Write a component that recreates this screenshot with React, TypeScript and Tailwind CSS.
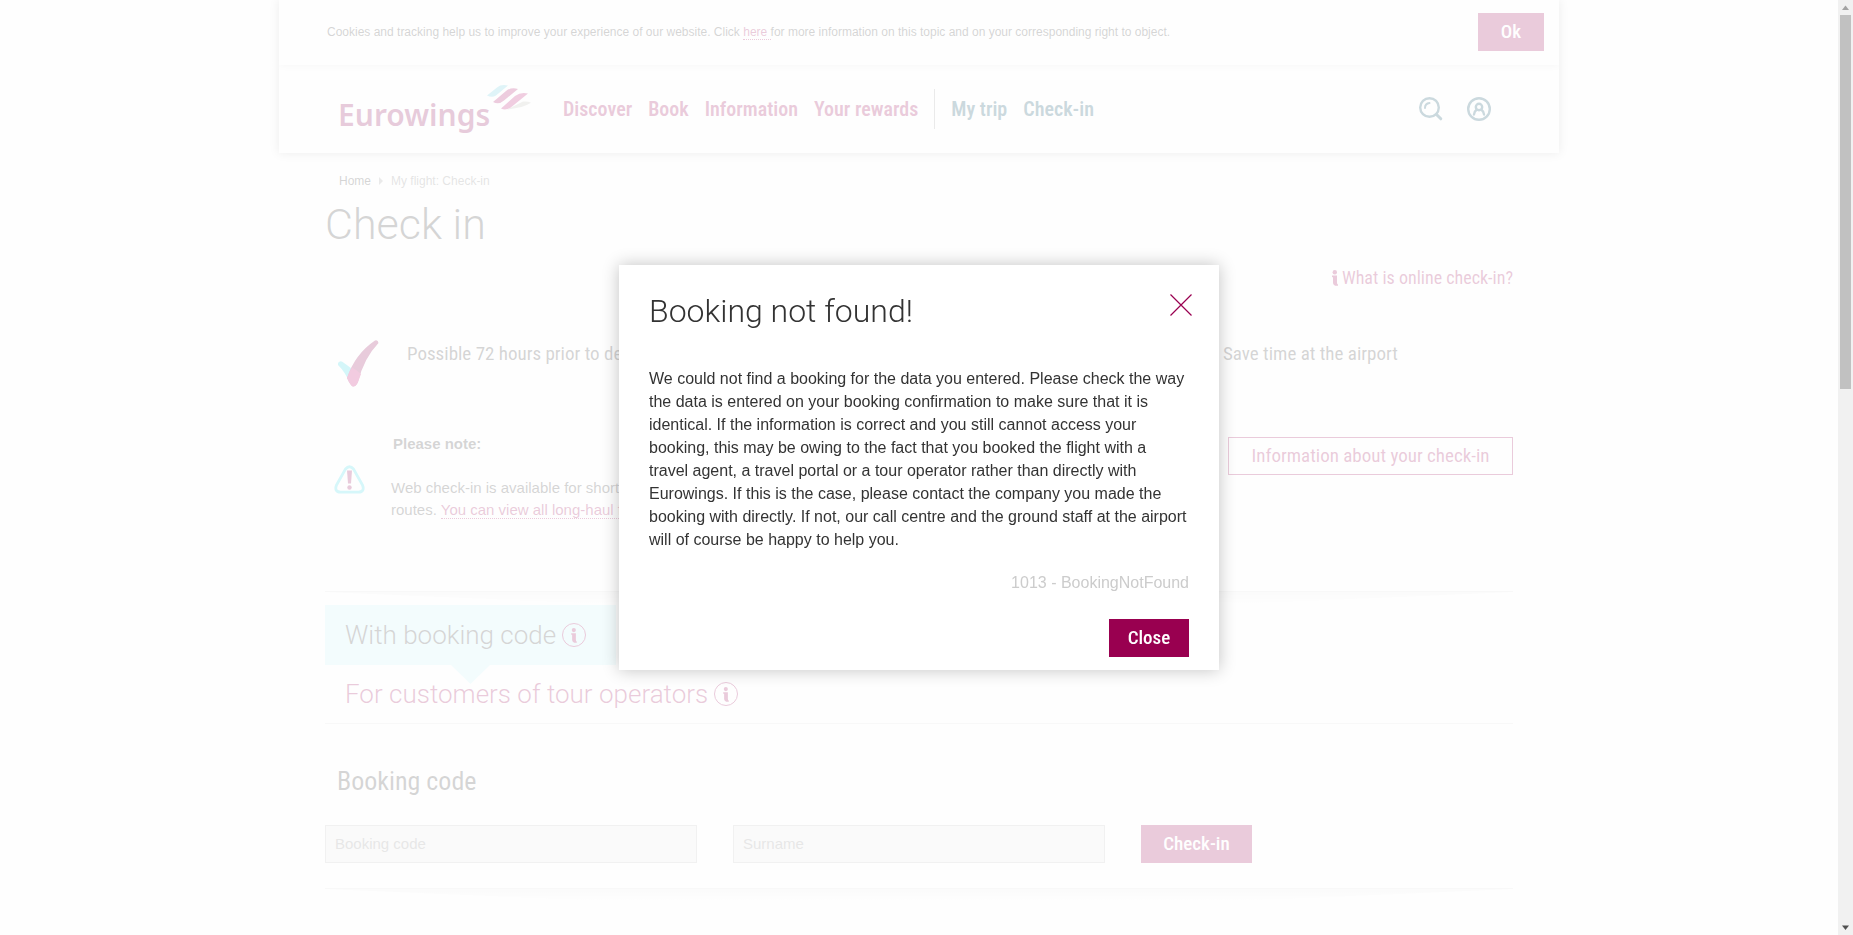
import type { ReactNode } from "react";

const NARROW = "font-['Roboto_Condensed','Liberation_Sans_Narrow','Liberation_Sans',sans-serif]";
const LIGHT = "font-['Roboto','Inter',sans-serif] font-light";

function Logo() {
  return (
    <a href="#home" aria-label="Eurowings" className="relative -ml-px flex h-[50px] w-[193px] items-end text-[#8a0050]">
      <span className="font-['Noto_Sans','Open_Sans',sans-serif] text-[30px] leading-[38px] font-semibold">Eurowings</span>
      <svg className="absolute top-0 right-0 h-[27px] w-[44px]" viewBox="0 0 44 27" aria-hidden="true">
        <path d="M20 25.500 L36 17.500 Q41 17 44 18.800 Q36 24 20 25.500Z" fill="#bdbdb6" />
        <path d="M0 11.500 L10 3.500 Q14 0 21 1.500 L9 11.500 Q5 14 0 11.500Z" fill="#66cbe0" />
        <path d="M6 18 L19 7 Q24 3 31 5 L17 16.500 Q12 21 6 18Z" fill="#a80860" />
        <path d="M14 24.500 L28 12 Q34 7.500 41 9.500 L25 22.500 Q19.500 27 14 24.500Z" fill="#b80a6a" />
      </svg>
    </a>
  );
}

function InfoGlyph({ className }: { className: string }) {
  return (
    <svg className={className} viewBox="0 0 6 16" fill="currentColor" aria-hidden="true">
      <circle cx="2.800" cy="2.200" r="2.200" />
      <path d="M0 5.500 H5 V12.500 Q5 14.500 6 14.500 V15.800 Q1 16.200 1 12.500 V7.500 Q1 7 0 7Z" />
    </svg>
  );
}

function InfoButton({ label }: { label: string }) {
  return (
    <button type="button" aria-label={label} className="flex size-6 items-center justify-center rounded-full border border-[#990050] text-[#990050]">
      <InfoGlyph className="h-[15px] w-[6px]" />
    </button>
  );
}

function CheckMark() {
  return (
    <svg className="ml-[13px] h-[47px] w-[41px] shrink-0" viewBox="0 0 41 47" aria-hidden="true">
      <path d="M1 22 Q3 20 6 23 Q12 27 20 34 L11 42 Q8 33 0 25 Q-0.500 23 1 22Z" fill="#30d6e6" />
      <path d="M9 38 Q17 14 37 0.500 Q40 -0.500 40.500 3 Q26 18 20 42 Q18 46.500 15 46.500 Q13 46.500 9 38Z" fill="#8f0050" />
      <path d="M9 38 Q11 32 14 27.500 Q18 29.500 23 34 L20 42 Q18 46.500 15 46.500 Q13 46.500 9 38Z" fill="#c40468" />
    </svg>
  );
}

function Benefit({ children }: { children: ReactNode }) {
  return (
    <li className="flex h-[47px] items-start">
      <CheckMark />
      <span className={`${NARROW} ml-7 text-[19px] leading-[28px] whitespace-nowrap`}>{children}</span>
    </li>
  );
}

function ShadowRule() {
  return (
    <div className="h-[14px] border-t border-[#dedede]" aria-hidden="true">
      <div className="h-full bg-linear-to-b from-[#ededed] to-white [clip-path:polygon(0_0,100%_0,75%_100%,25%_100%)]" />
    </div>
  );
}

function Field({ label }: { label: string }) {
  return (
    <input
      type="text"
      aria-label={label}
      placeholder={label}
      className="h-[38px] w-full border border-[#bcbcbc] bg-[#e8e8e8] px-[9px] pb-[2px] text-[15px] placeholder:text-[#8a8a8a]"
    />
  );
}

const primaryButton = `${NARROW} h-[38px] bg-[#990050] text-[19px] leading-[38px] font-medium text-white`;

function BookingDialog() {
  return (
    <div className="fixed inset-0 z-10 flex items-center justify-center bg-transparent pr-[15px]">
      <section
        role="dialog"
        aria-modal="true"
        aria-labelledby="dialog-title"
        className="w-[600px] max-w-full bg-white px-[30px] pt-[26px] pb-[13px] shadow-[0_0_16px_rgba(0,0,0,0.24)]"
      >
        <header className="flex items-start justify-between">
          <h2 id="dialog-title" className={`${LIGHT} text-[32px] leading-[40px]`}>Booking not found!</h2>
          <button type="button" aria-label="Close dialog" className="-mr-[5px] flex h-7 w-[26px] items-center justify-center text-[#990050]">
            <svg className="size-[22px]" viewBox="0 0 22 22" stroke="currentColor" strokeWidth="1.200" aria-hidden="true">
              <path d="M0.500 0.500 L21.500 21.500 M21.500 0.500 L0.500 21.500" />
            </svg>
          </button>
        </header>
        <p className="mt-[36px] text-[16px] leading-[23px]">
          We could not find a booking for the data you entered. Please check the way the data is entered on your booking
          confirmation to make sure that it is identical. If the information is correct and you still cannot access your
          booking, this may be owing to the fact that you booked the flight with a travel agent, a travel portal or a tour
          operator rather than directly with Eurowings. If this is the case, please contact the company you made the booking
          with directly. If not, our call centre and the ground staff at the airport will of course be happy to help you.
        </p>
        <p className="mt-5 text-right text-[16px] leading-[23px] text-[#cccccc]">1013 - BookingNotFound</p>
        <div className="mt-[25px] flex justify-end">
          <button type="button" className={`${primaryButton} w-20`}>Close</button>
        </div>
      </section>
    </div>
  );
}

function ScrollBar() {
  return (
    <div className="fixed inset-y-0 right-0 z-20 flex w-[15px] flex-col items-center bg-[#f1f1f1]" aria-hidden="true">
      <svg className="h-[15px] w-[15px] shrink-0" viewBox="0 0 15 15"><path d="M7.500 5.500 L11 10 H4Z" fill="#a3a3a3" /></svg>
      <div className="h-[40%] w-[11px] bg-[#c1c1c1]" />
      <svg className="mt-auto h-[15px] w-[15px] shrink-0" viewBox="0 0 15 15"><path d="M7.500 10 L11 5.500 H4Z" fill="#505050" /></svg>
    </div>
  );
}

export default function App() {
  return (
    <div className="h-screen overflow-hidden bg-white pr-[15px] font-['Liberation_Sans',Arial,sans-serif] text-[#333333]">
      <div className="mx-auto max-w-[1280px]">
        <div className="shadow-[0_0_12px_rgba(0,0,0,0.2)]">
          <div className="relative z-[1] flex h-[65px] items-center justify-between bg-white pr-[15px] pb-[2px] pl-12 shadow-[0_0_8px_rgba(0,0,0,0.18)]">
            <p className="text-[12px] leading-[18px]">
              Cookies and tracking help us to improve your experience of our website. Click{" "}
              <a href="#privacy" className="border-b border-dotted border-[#990050] text-[#990050]">here </a>
              for more information on this topic and on your corresponding right to object.
            </p>
            <button type="button" className={`${primaryButton} w-[66px]`}>Ok</button>
          </div>
          <header className="flex h-[88px] items-center pr-[68px] pl-[60px] shadow-[0_0_8px_rgba(0,0,0,0.18)]">
            <Logo />
            <nav className={`${NARROW} ml-8 flex items-center gap-4 text-[20px] font-semibold text-[#990050]`}>
              <a href="#discover">Discover</a>
              <a href="#book">Book</a>
              <a href="#information">Information</a>
              <a href="#rewards">Your rewards</a>
              <span className="h-10 w-px bg-[#999999]" />
              <a href="#trip" className="text-[#004660]">My trip</a>
              <a href="#check-in" className="text-[#004660]">Check-in</a>
            </nav>
            <div className="ml-auto flex gap-6 text-[#004660]">
              <button type="button" aria-label="Search">
                <svg className="size-6" viewBox="0 0 24 24" fill="none" stroke="currentColor" strokeLinecap="round" aria-hidden="true">
                  <circle cx="10.500" cy="10.500" r="9.300" strokeWidth="2.400" />
                  <path d="M6 11 Q6 6.500 10.500 6" strokeWidth="2" />
                  <path d="M17.500 17.500 L21.800 21.800" strokeWidth="3" />
                </svg>
              </button>
              <button type="button" aria-label="Account">
                <svg className="size-6" viewBox="0 0 24 24" fill="none" stroke="currentColor" strokeWidth="2.400" strokeLinecap="round" aria-hidden="true">
                  <circle cx="12" cy="12" r="10.800" />
                  <circle cx="12" cy="10" r="3.200" />
                  <path d="M7 17.500 Q7.200 14.500 9.500 12.800 M17 17.500 Q16.800 14.500 14.500 12.800" />
                </svg>
              </button>
            </div>
          </header>
        </div>

        <main className="px-[46px]">
          <nav aria-label="Breadcrumb" className="mt-[19px] flex items-center gap-2 pl-[14px] text-[12px] leading-[18px]">
            <a href="#home">Home</a>
            <svg className="h-2 w-1" viewBox="0 0 4 8" fill="#999999" aria-hidden="true"><path d="M0 0 L4 4 L0 8Z" /></svg>
            <span className="text-[#808080]">My flight: Check-in</span>
          </nav>
          <h1 className={`${LIGHT} mt-2 text-[43px] leading-[52px]`}>Check in</h1>
          <div className="mt-4 flex justify-end">
            <a href="#about" className={`${NARROW} flex items-center gap-1 text-[18px] leading-6 text-[#990050]`}>
              <InfoGlyph className="h-4 w-[6px]" />
              What is online check-in?
            </a>
          </div>
          <ul className="mt-[50px] grid grid-cols-3 gap-9">
            <Benefit>Possible 72 hours prior to departure</Benefit>
            <li />
            <Benefit>Save time at the airport</Benefit>
          </ul>

          <section className="mt-[46px] flex items-start">
            <svg className="mt-8 ml-[9px] h-[29px] w-[31px] shrink-0" viewBox="0 0 31 29" fill="none" aria-hidden="true">
              <path d="M11.500 4 Q15.500 -0.500 19.500 4 L28.500 20 Q31 27 24.500 27.200 H6.500 Q0 27 2.500 20Z" stroke="#38dae8" strokeWidth="2.800" />
              <path d="M13 5.500 H18 L17 18.500 H14Z" fill="#8f0050" />
              <circle cx="15.500" cy="22.500" r="2.200" fill="#8f0050" />
            </svg>
            <div className="ml-[26px] w-[560px] text-[15px] leading-[22px]">
              <h2 className="pl-[2px] font-bold">Please note:</h2>
              <p className="mt-[22px]">
                Web check-in is available for short and medium-haul
                <br />
                routes.{" "}
                <a href="#long-haul" className="border-b border-dotted border-[#990050] text-[#990050]">You can view all long-haul flights here.</a>
              </p>
            </div>
            <a
              href="#check-in-information"
              className={`${NARROW} mt-1 ml-auto flex h-[38px] w-[285px] items-center justify-center border border-[#990050] text-[19px] text-[#990050]`}
            >
              Information about your check-in
            </a>
          </section>

          <div className="mt-[70px]"><ShadowRule /></div>

          <div className="border-b border-[#dedede]">
            <div className="relative flex h-[60px] w-[291px] items-center bg-[#c8f2f8] pl-5">
              <button type="button" className={`${LIGHT} text-[26px]`}>With booking code</button>
              <span className="ml-[6px]"><InfoButton label="About booking codes" /></span>
              <svg className="absolute top-full left-[126px] h-[19px] w-[39px]" viewBox="0 0 39 19" aria-hidden="true">
                <path d="M0 0 H39 L19.500 19Z" fill="#c8f2f8" />
              </svg>
            </div>
            <div className="relative flex h-[58px] items-center pl-5">
              <button type="button" className={`${LIGHT} text-[26px] text-[#990050]`}>For customers of tour operators</button>
              <span className="ml-[6px]"><InfoButton label="About tour operator bookings" /></span>
            </div>
          </div>

          <h2 className={`${NARROW} mt-[39px] pl-3 text-[26px] leading-9`}>Booking code</h2>
          <form className="mt-[26px] grid grid-cols-3 gap-9">
            <Field label="Booking code" />
            <Field label="Surname" />
            <button type="submit" className={`${primaryButton} w-[111px]`}>Check-in</button>
          </form>
          <div className="mt-[25px]"><ShadowRule /></div>
        </main>
      </div>

      <div className="fixed inset-0 z-[5] bg-[#fefefe]/80" aria-hidden="true" />
      <BookingDialog />
      <ScrollBar />
    </div>
  );
}
